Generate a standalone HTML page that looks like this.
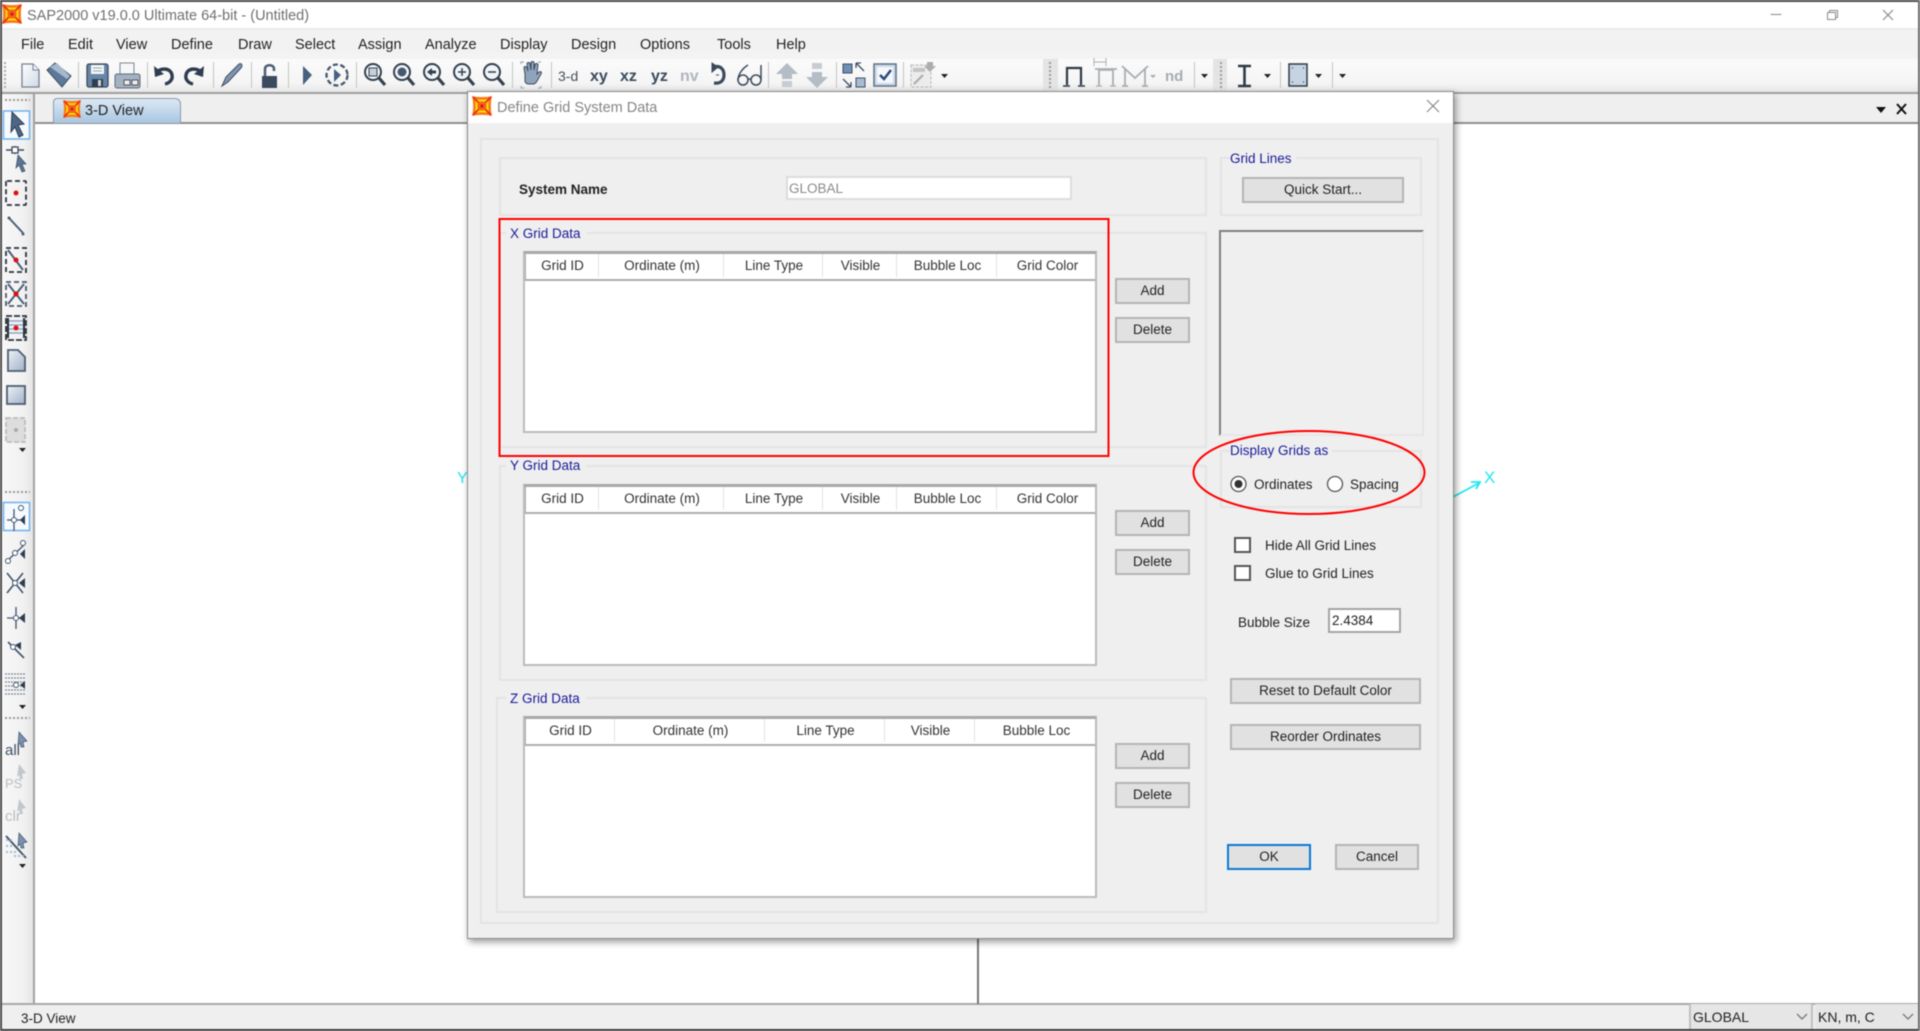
<!DOCTYPE html>
<html>
<head>
<meta charset="utf-8">
<title>SAP2000 v19.0.0 Ultimate 64-bit - (Untitled)</title>
<style>
html,body{margin:0;padding:0;width:1920px;height:1031px;overflow:hidden;background:#fff}
#root{position:relative;width:1920px;height:1031px;overflow:hidden;font-family:"Liberation Sans",sans-serif;background:#fff;filter:blur(.45px)}
.a{position:absolute;box-sizing:border-box}
.t{position:absolute;white-space:nowrap;line-height:18px;height:18px;color:#222;font-size:13.5px;margin-top:1px}
.m{font-size:14.5px;color:#222;top:35px}
.b{font-size:13.5px;color:#1a1a9a}
.btn{position:absolute;box-sizing:border-box;background:#e1e1e1;border:2px solid #b4b4b4;text-align:center;font-size:13.5px;color:#222;line-height:21px;white-space:nowrap}
.grp{position:absolute;box-sizing:border-box;border:2px solid #e4e4e4}
.tbl{position:absolute;box-sizing:border-box;background:#fff;border:2px solid #bcbcbc;border-top:3px solid #a8a8a8;left:523px;width:574px;height:182px}
.hd{position:absolute;left:0;top:0;height:25px;width:100%;border-bottom:2px solid #acacac;background:#fff;box-shadow:inset 1px 0 0 #b0b0b0}
.c{position:absolute;top:0;height:23px;padding-left:2px;text-align:center;font-size:13.5px;line-height:24px;color:#333;border-right:1px solid #e2e2e2;box-sizing:border-box;white-space:nowrap}
</style>
</head>
<body>
<div id="root">
<svg width="0" height="0" style="position:absolute">
  <defs>
    <symbol id="logo" viewBox="0 0 20 20">
      <path d="M0 0C6 1.500 14 1.500 20 0C18.500 6 18.500 14 20 20C14 18.500 6 18.500 0 20C1.500 14 1.500 6 0 0Z" fill="#f77a1a"/>
      <path d="M3 3C7 4 13 4 17 3C16 7 16 13 17 17C13 16 7 16 3 17C4 13 4 7 3 3Z" fill="#ffe600"/>
      <path d="M1 1L19 19M19 1L1 19" stroke="#ea2a18" stroke-width="1.800"/>
      <path d="M7.500 5.500h5l2 2v5l-2 2h-5l-2-2v-5z" fill="#f4641a"/>
      <path d="M8.500 8.500h3v3h-3z" fill="#d81818"/>
    </symbol>
    <linearGradient id="gb" x1="0" y1="0" x2="1" y2="1"><stop offset="0" stop-color="#eef2f7"/><stop offset="1" stop-color="#9fb1c7"/></linearGradient>
    <linearGradient id="gw" x1="0" y1="0" x2="1" y2="1"><stop offset="0" stop-color="#fff"/><stop offset="1" stop-color="#cfd9e5"/></linearGradient>
  </defs>
</svg>

<!-- window frame bars -->
<div class="a" style="left:0;top:0;width:1920px;height:2px;background:#4a4a4a"></div>
<div class="a" style="left:0;top:2px;width:1920px;height:27px;background:#fff"></div>
<div class="a" style="left:0;top:28px;width:1920px;height:31px;background:linear-gradient(#e9e9e9 0,#f2f2f2 8%,#f3f3f3)"></div>
<div class="a" style="left:0;top:59px;width:1920px;height:34px;background:linear-gradient(#fbfbfb,#f5f5f5 70%,#e6e6e6)"></div>
<div class="a" style="left:0;top:92px;width:1920px;height:2px;background:#9e9e9e"></div>
<div class="a" style="left:35px;top:94px;width:1885px;height:28px;background:#efefef"></div>
<div class="a" style="left:35px;top:122px;width:1885px;height:2px;background:#8f8f8f"></div>
<div class="a" style="left:0;top:94px;width:34px;height:910px;background:linear-gradient(90deg,#f8f8f8,#f1f1f1 70%,#e4e4e4)"></div>
<div class="a" style="left:33px;top:94px;width:2px;height:910px;background:#a2a2a2"></div>
<div class="a" style="left:0;top:1003px;width:1920px;height:26px;background:#efefef;border-top:2px solid #a8a8a8"></div>
<div class="a" style="left:0;top:1029px;width:1920px;height:2px;background:#3c3c3c"></div>
<div class="a" style="left:0;top:0;width:2px;height:1031px;background:#4a4a4a"></div>
<div class="a" style="left:1918px;top:0;width:2px;height:1031px;background:#6a6a6a"></div>
<div class="a" style="left:977px;top:930px;width:2px;height:74px;background:#777"></div>

<!-- Title bar -->
<svg class="a" style="left:2px;top:4px" width="20" height="20"><use href="#logo"/></svg>
<div class="t" style="left:27px;top:6px;font-size:14.5px;color:#707070">SAP2000 v19.0.0 Ultimate 64-bit - (Untitled)</div>
<svg class="a" style="left:1760px;top:4px" width="150" height="22" fill="none" stroke="#8a8a8a" stroke-width="1">
  <path d="M10.500 10.500h11"/>
  <path d="M67.500 8.500h8v7h-8zM69.500 8.500v-2h8v7h-2"/>
  <path d="M123 6l10 10M133 6l-10 10" stroke-width="1.200"/>
</svg>

<!-- Menu -->
<div class="t m" style="left:21px">File</div>
<div class="t m" style="left:68px">Edit</div>
<div class="t m" style="left:116px">View</div>
<div class="t m" style="left:171px">Define</div>
<div class="t m" style="left:238px">Draw</div>
<div class="t m" style="left:295px">Select</div>
<div class="t m" style="left:358px">Assign</div>
<div class="t m" style="left:425px">Analyze</div>
<div class="t m" style="left:500px">Display</div>
<div class="t m" style="left:571px">Design</div>
<div class="t m" style="left:640px">Options</div>
<div class="t m" style="left:717px">Tools</div>
<div class="t m" style="left:776px">Help</div>

<!-- Toolbar and left toolbar icons -->
<svg class="a" style="left:0;top:0" width="1920" height="1031" font-family="Liberation Sans, sans-serif">
  <!-- grips -->
  <path d="M5 62v28" stroke="#aaa" stroke-width="2" stroke-dasharray="2 2"/>
  <rect x="1043" y="59" width="15" height="33" fill="#e4e4e4"/>
  <rect x="1213" y="59" width="14" height="33" fill="#e4e4e4"/>
  <path d="M1050 62v28M1221 62v28" stroke="#9a9a9a" stroke-width="2" stroke-dasharray="2 2"/>
  <!-- separators -->
  <path d="M78.500 62v26M147.500 62v26M213.500 62v26M251.500 62v26M288.500 62v26M356.500 62v26M512.500 62v26M551.500 62v26M768.500 62v26M836.500 62v26M903.500 62v26M1194.500 62v26M1280.500 62v26M1332.500 62v26" stroke="#c4c4c4"/>
  <!-- new -->
  <path d="M22 64h11l6 6v17H22z" fill="url(#gw)" stroke="#76818f" stroke-width="1.300"/><path d="M33 64v6h6" fill="#eef" stroke="#76818f"/>
  <!-- open -->
  <path d="M47 70l8-7 16 13-9 11z" fill="#5d7898" stroke="#3d4e63"/><path d="M50 67l7-4 13 13-3 3z" fill="#a5b8cf"/>
  <!-- save -->
  <rect x="87" y="64" width="21" height="23" rx="2" fill="#6986a8" stroke="#3b4a5c" stroke-width="1.300"/><rect x="91" y="65" width="13" height="9" fill="#f4f6f8"/><path d="M93 68h9M93 71h9" stroke="#9aa"/><rect x="92" y="79" width="11" height="8" fill="#2f3e50"/><rect x="98" y="80" width="3" height="6" fill="#cfd6de"/>
  <!-- print -->
  <rect x="120" y="63" width="14" height="12" fill="#f5f7f9" stroke="#7a8794"/><rect x="115" y="74" width="25" height="14" rx="2" fill="#a3b1c1" stroke="#5e6c7b"/><rect x="124" y="80" width="6" height="5" fill="#eee" stroke="#556"/><rect x="132" y="80" width="6" height="5" fill="#eee" stroke="#556"/>
  <!-- undo redo -->
  <g fill="none" stroke="#2f3d50" stroke-width="3.400"><path d="M156 73c5-6 15-5 16 2 1 4-2 8-7 9"/><path d="M202 73c-5-6-15-5-16 2-1 4 2 8 7 9"/></g>
  <path d="M154 66l1 11 9-3zM204 66l-1 11-9-3z" fill="#2f3d50"/>
  <!-- pencil -->
  <path d="M222 86l4-9 13-13c2-1 3 0 3 2l-1 2-13 14z" fill="#7f95b0" stroke="#3e4d60"/>
  <!-- lock -->
  <rect x="262" y="76" width="15" height="12" fill="#3b4a5e"/><path d="M265 76v-7c0-5 9-5 9 0v2" fill="none" stroke="#4c5d73" stroke-width="2.500"/>
  <!-- play -->
  <path d="M303 66l9 9-9 10z" fill="#46617f"/>
  <circle cx="337" cy="75" r="10.500" fill="none" stroke="#46586d" stroke-width="2.300" stroke-dasharray="5 2.500"/><path d="M334 69l7 6-7 7z" fill="#46617f"/>
  <!-- zooms -->
  <g fill="#f2f5f8" stroke="#33414f" stroke-width="2">
    <circle cx="373" cy="72" r="8"/><circle cx="402" cy="72" r="8"/><circle cx="432" cy="72" r="8"/><circle cx="462" cy="72" r="8"/><circle cx="492" cy="72" r="8"/>
  </g>
  <g stroke="#33414f" stroke-width="3.200" fill="none"><path d="M379 78l6 7M408 78l6 7M438 78l6 7M468 78l6 7M498 78l6 7"/></g>
  <rect x="369" y="68" width="8" height="8" fill="#c5d0dc" stroke="#33414f"/>
  <circle cx="402" cy="72" r="4.500" fill="#46586d"/>
  <path d="M427 72l5-4v2.500h4v3h-4v2.500z" fill="#33414f"/>
  <path d="M458 72h8M462 68v8M488 72h8" stroke="#33414f" stroke-width="1.500"/>
  <!-- hand -->
  <path d="M521 64v-2h3M541 62h-3M521 88v-2M541 88v-2M521 88h3M541 88h-3" fill="none" stroke="#9fb0c4" stroke-width="1.300"/>
  <path d="M525 74l-1-6c0-2 2-2 3 0l1 3-1-7c0-2 3-2 3 0l1 6 0-7c0-2 3-2 3 0l0 7 1-5c0-2 3-2 3 0l-1 9 2-2c2-1 3 0 2 2l-4 7c-1 2-2 3-4 3h-4c-3 0-4-2-4-3z" fill="#8fa4bc" stroke="#3d4b5c"/>
  <!-- view text -->
  <text x="558" y="81" font-size="14" fill="#46505c">3-d</text>
  <g font-size="16" font-weight="bold" fill="#3b4a5c"><text x="590" y="81">xy</text><text x="620" y="81">xz</text><text x="651" y="81">yz</text></g>
  <text x="680" y="81" font-size="16" font-weight="bold" fill="#b0b6bd">nv</text>
  <!-- rotate -->
  <path d="M714 67c7-2 10 3 10 8 0 5-3 9-10 8" fill="none" stroke="#3c4a5c" stroke-width="3.200"/><path d="M712 63l6 4-6 5zM716 75h3" fill="#3c4a5c" stroke="#3c4a5c"/>
  <!-- glasses -->
  <g fill="none" stroke="#3c4a5c" stroke-width="1.500"><circle cx="743" cy="80" r="5"/><circle cx="756" cy="80" r="5"/><path d="M748 79h3M738 80c0-6 5-12 10-15M761 80V65"/></g>
  <!-- up / down -->
  <path d="M787 63l11 11h-6v5H782v-5h-6z" fill="#b4bcc5"/><rect x="782" y="81" width="10" height="6" fill="#c6ccd2"/>
  <path d="M817 88l11-11h-6v-5h-10v5h-6z" fill="#b4bcc5"/><rect x="812" y="63" width="10" height="6" fill="#c6ccd2"/>
  <!-- tile -->
  <rect x="843" y="64" width="9" height="9" fill="#6f8fb5" stroke="#3e4e63"/><rect x="856" y="78" width="9" height="9" fill="#a9bbd1" stroke="#3e4e63"/><path d="M856 63l8 8M856 63h5M856 63v5M851 87l-8-8M851 87h-5M851 87v-5" fill="none" stroke="#3e4e63" stroke-width="1.300"/>
  <!-- check -->
  <rect x="874" y="64" width="22" height="22" fill="#ced9e6" stroke="#5c7089" stroke-width="1.500"/><rect x="877" y="67" width="16" height="16" fill="#f4f7fb"/><path d="M880 75l4 4 7-9" fill="none" stroke="#2b4b78" stroke-width="2.500"/>
  <!-- disabled -->
  <rect x="911" y="65" width="20" height="22" fill="#ececec" stroke="#b8b8b8" stroke-dasharray="3 1.500"/><path d="M927 62h6v4h3l-6 6-6-6h3z" fill="#adadad"/><path d="M914 84l9-9" stroke="#aaa" stroke-width="2"/><rect x="913" y="68" width="12" height="4" fill="#c4c4c4"/>
  <path d="M941 74h7l-3.500 4z" fill="#222"/>
  <!-- Portal -->
  <path d="M1067 85V68h14v17" fill="none" stroke="#2e3a47" stroke-width="2.200"/><path d="M1063 86h7M1078 86h7" stroke="#2e3a47" stroke-width="1.500"/>
  <g fill="none" stroke="#a9aeb4" stroke-width="1.800"><path d="M1099 86V70h14v16M1095 69h22"/><path d="M1094 58v8M1094 62h12M1106 58v8" stroke-width="1"/><path d="M1096 86h6M1110 86h6" stroke-width="1.200"/></g>
  <g fill="none" stroke="#a9aeb4" stroke-width="1.800"><path d="M1125 86V68M1145 86V68M1122 66l13 12 13-12M1122 86h6M1142 86h6"/></g>
  <path d="M1150 75h6l-3 3z" fill="#a8a8a8"/>
  <text x="1165" y="81" font-size="15" font-weight="bold" fill="#a6acb3">nd</text>
  <path d="M1201 74h7l-3.500 4z" fill="#222"/>
  <path d="M1238 66h13M1238 86h13M1244.500 66v20" stroke="#2e3a47" stroke-width="2.600" fill="none"/>
  <path d="M1264 74h7l-3.500 4z" fill="#222"/>
  <rect x="1289" y="64" width="18" height="22" fill="#c6d3e2" stroke="#2e3a47" stroke-width="1.500"/><path d="M1292 68h1M1304 68h-1M1292 82h1M1304 82h-1" stroke="#222"/>
  <path d="M1315 74h7l-3.500 4zM1339 74h7l-3.500 4z" fill="#222"/>

  <!-- Left toolbar grips -->
  <path d="M5 100h25M5 492h25M5 718h25" stroke="#9a9a9a" stroke-width="2" stroke-dasharray="2 2"/>
  <rect x="3.500" y="111" width="26" height="28" fill="#f6faff" stroke="#6fb0ee" stroke-width="1.500"/>
  <rect x="3.500" y="502.500" width="26" height="28" fill="#f6faff" stroke="#6fb0ee" stroke-width="1.500"/>
  <!-- arrow -->
  <path d="M12 112l12 12-6 1 5 10-4 2-4-10-4 5z" fill="#4d6887" stroke="#2c3b4d"/>
  <!-- point + arrow -->
  <path d="M6 150h18M15 146v8" stroke="#3c4a5c" stroke-width="1.500"/><rect x="12" y="147" width="6" height="6" fill="#fff" stroke="#3c4a5c" stroke-width="1.300"/>
  <path d="M18 155l8 9-4 0 3 7-3 1-3-7-3 3z" fill="#5b7797" stroke="#3c4a5c" stroke-width=".7"/>
  <!-- dash box w/ point -->
  <rect x="6" y="181" width="20" height="24" rx="1" fill="none" stroke="#29323c" stroke-width="1.800" stroke-dasharray="5 3"/><circle cx="16" cy="193" r="2.500" fill="#e01010"/>
  <!-- line -->
  <path d="M9 218l14 15" stroke="#4a5e78" stroke-width="2"/><circle cx="9" cy="218" r="1.500" fill="#4a5e78"/><circle cx="23" cy="234" r="1.500" fill="#4a5e78"/>
  <!-- dash line -->
  <rect x="6" y="248" width="20" height="24" fill="none" stroke="#29323c" stroke-width="1.800" stroke-dasharray="5 3"/><path d="M8 250l15 20" stroke="#4a5e78" stroke-width="2"/><circle cx="16" cy="260" r="2.500" fill="#e01010"/>
  <!-- dash X -->
  <rect x="6" y="282" width="20" height="24" fill="none" stroke="#4a5a6c" stroke-width="1.800" stroke-dasharray="5 3"/><path d="M8 284l16 20M24 284L8 304" stroke="#4a5e78" stroke-width="2"/><circle cx="16" cy="294" r="2.500" fill="#e01010"/>
  <!-- dash stripes -->
  <rect x="6" y="316" width="20" height="24" fill="none" stroke="#29323c" stroke-width="1.800" stroke-dasharray="6 2"/><path d="M9 321h14M9 325h14M9 329h14M9 333h14" stroke="#8ea7c4" stroke-width="1.500"/><path d="M8 318v20M24 318v20" stroke="#29323c" stroke-width="2"/><circle cx="16" cy="328" r="2.500" fill="#e01010"/>
  <!-- area -->
  <path d="M8 350h10l7 7v14H8z" fill="url(#gb)" stroke="#4e5d6f" stroke-width="1.800"/>
  <rect x="7" y="386" width="18" height="18" fill="url(#gb)" stroke="#4e5d6f" stroke-width="1.800"/>
  <rect x="6" y="418" width="19" height="24" fill="#ddd" stroke="#bcbcbc" stroke-width="1.800" stroke-dasharray="5 2"/><circle cx="16" cy="430" r="2" fill="#aaa"/>
  <path d="M19 448h7l-3.500 4z" fill="#222"/>
  <!-- snap 1 -->
  <path d="M7 520h17M14 509v22" stroke="#3f556e" stroke-width="1.300"/><circle cx="14" cy="520" r="2.500" fill="#fff" stroke="#3f556e"/><circle cx="21" cy="508" r="2.500" fill="#fff" stroke="#3f556e"/><path d="M25 515l-5 5 5 5z" fill="#2f3d50"/>
  <!-- snap 2 -->
  <path d="M7 561l17-16" stroke="#3f556e" stroke-width="1.300"/><circle cx="8" cy="561" r="2.500" fill="#fff" stroke="#3f556e"/><circle cx="15" cy="553" r="2.500" fill="#fff" stroke="#3f556e"/><circle cx="23" cy="543" r="2.500" fill="#fff" stroke="#3f556e"/><path d="M25 549l-5 5 5 5z" fill="#2f3d50"/>
  <!-- snap 3 -->
  <path d="M7 573l16 20M23 573L7 593" stroke="#3f556e" stroke-width="1.600"/><circle cx="15" cy="583" r="2.500" fill="#fff" stroke="#3f556e"/><path d="M25 578l-6 5 6 5z" fill="#2f3d50"/>
  <!-- snap 4 -->
  <path d="M7 618h13M16 607v22" stroke="#3f556e" stroke-width="1.300"/><circle cx="16" cy="618" r="2.500" fill="#fff" stroke="#3f556e"/><path d="M25 613l-6 5 6 5z" fill="#2f3d50"/>
  <!-- snap 5 -->
  <path d="M8 642l16 16" stroke="#3f556e" stroke-width="1.600"/><circle cx="13" cy="647" r="2.500" fill="#fff" stroke="#3f556e"/><path d="M21 642l-6 3 6 5z" fill="#2f3d50"/>
  <!-- grid snap -->
  <path d="M5 674h20M5 678h20M5 682h20M5 686h20M5 690h20M5 694h20" stroke="#7d8793" stroke-width="1.300" stroke-dasharray="2 1"/><circle cx="16" cy="685" r="2.500" fill="#fff" stroke="#3f556e"/><path d="M25 681l-5 4 5 4z" fill="#2f3d50"/>
  <path d="M19 705h7l-3.500 4z" fill="#222"/>
  <!-- all / ps / clr -->
  <text x="5" y="755" font-size="15" fill="#3f5067">all</text>
  <path d="M19 732l8 9-4 1 1 5-3 0-1-4-2 2z" fill="#7a92ad" stroke="#46576b" stroke-width=".7"/>
  <text x="5" y="788" font-size="13" fill="#b9bdc2">PS</text>
  <path d="M19 764l7 9-4 1 1 5-3 0-1-4-2 2z" fill="#c3c7cc"/>
  <text x="5" y="821" font-size="15" fill="#b9bdc2">clr</text>
  <path d="M19 799l7 9-4 1 1 5-3 0-1-4-2 2z" fill="#c3c7cc"/>
  <path d="M6 836l20 22" stroke="#46576b" stroke-width="2"/><path d="M6 840h6M6 846h6M6 852h12M14 856h12" stroke="#a6bad2" stroke-dasharray="2 2" stroke-width="2"/>
  <path d="M19 833l8 9-4 1 1 5-3 0-1-4-2 2z" fill="#7a92ad" stroke="#46576b" stroke-width=".7"/>
  <path d="M19 864h7l-3.500 4z" fill="#222"/>

  <!-- tab strip controls -->
  <path d="M1876 107h10l-5 6z" fill="#111"/>
  <path d="M1897 104l9 10M1906 104l-9 10" stroke="#111" stroke-width="2"/>
  <!-- axes -->
  <text x="457" y="483" font-size="16" fill="#20e5ee">Y</text>
  <path d="M1453 497l26-14M1471 482l9 0-4 7" fill="none" stroke="#20e8f0" stroke-width="1.800"/>
  <text x="1484" y="483" font-size="17" fill="#20e8f0">X</text>
</svg>

<!-- Tab -->
<div class="a" style="left:53px;top:98px;width:128px;height:25px;background:linear-gradient(#dce8f4,#a9c6e2);border:1px solid #8a9aac;border-bottom:none;border-radius:4px 6px 0 0"></div>
<svg class="a" style="left:63px;top:100px" width="18" height="18"><use href="#logo"/></svg>
<div class="t" style="left:85px;top:101px;font-size:14.5px;color:#222">3-D View</div>

<!-- Status bar -->
<div class="t" style="left:21px;top:1009px;font-size:13.5px">3-D View</div>
<div class="a" style="left:1689px;top:1004px;width:124px;height:25px;background:#e6e6e6;border-left:2px solid #c0c0c0;border-right:2px solid #c0c0c0"></div>
<div class="t" style="left:1693px;top:1007px;font-size:14px">GLOBAL</div>
<div class="a" style="left:1815px;top:1004px;width:103px;height:25px;background:#e6e6e6"></div>
<div class="t" style="left:1818px;top:1007px;font-size:14px">KN, m, C</div>
<svg class="a" style="left:1795px;top:1011px" width="120" height="12" fill="none" stroke="#777" stroke-width="1.300"><path d="M2 3l5 5 5-5M108 3l5 5 5-5"/></svg>

<!-- Dialog -->
<div class="a" style="left:467px;top:91px;width:987px;height:848px;background:#efefef;border:1px solid #8a8a8a;box-shadow:2px 3px 7px rgba(0,0,0,.4)"></div>
<div class="a" style="left:468px;top:92px;width:985px;height:31px;background:#fff"></div>
<svg class="a" style="left:472px;top:96px" width="20" height="20"><use href="#logo"/></svg>
<div class="t" style="left:497px;top:98px;font-size:14.5px;color:#858585">Define Grid System Data</div>
<svg class="a" style="left:1426px;top:99px" width="14" height="14" fill="none" stroke="#7d7d7d" stroke-width="1"><path d="M1 1l12 12M13 1L1 13"/></svg>

<div class="grp" style="left:480px;top:138px;width:959px;height:786px"></div>
<div class="grp" style="left:499px;top:157px;width:708px;height:59px"></div>
<div class="grp" style="left:1220px;top:157px;width:202px;height:59px"></div>
<div class="t b" style="left:1230px;top:149px;background:#efefef;padding-right:4px">Grid Lines</div>
<div class="t" style="left:519px;top:180px;font-weight:bold;font-size:13.5px;color:#222">System Name</div>
<div class="a" style="left:786px;top:176px;width:286px;height:24px;background:#fff;border:2px solid #dcdcdc"></div>
<div class="t" style="left:789px;top:179px;font-size:13.5px;color:#8a8a8a">GLOBAL</div>
<div class="btn" style="left:1242px;top:177px;width:162px;height:26px">Quick Start...</div>

<!-- X group -->
<div class="grp" style="left:499px;top:232px;width:708px;height:216px"></div>
<div class="t b" style="left:506px;top:224px;background:#efefef;padding:0 6px 0 4px">X Grid Data</div>
<div class="tbl" style="top:251px">
  <div class="hd">
    <div class="c" style="left:0;width:74px">Grid ID</div>
    <div class="c" style="left:74px;width:125px">Ordinate (m)</div>
    <div class="c" style="left:199px;width:99px">Line Type</div>
    <div class="c" style="left:298px;width:74px">Visible</div>
    <div class="c" style="left:372px;width:100px">Bubble Loc</div>
    <div class="c" style="left:472px;width:99px;border-right:none">Grid Color</div>
  </div>
</div>
<div class="btn" style="left:1115px;top:278px;width:75px;height:26px">Add</div>
<div class="btn" style="left:1115px;top:317px;width:75px;height:26px">Delete</div>

<!-- Y group -->
<div class="grp" style="left:499px;top:465px;width:708px;height:216px"></div>
<div class="t b" style="left:506px;top:456px;background:#efefef;padding:0 6px 0 4px">Y Grid Data</div>
<div class="tbl" style="top:484px">
  <div class="hd">
    <div class="c" style="left:0;width:74px">Grid ID</div>
    <div class="c" style="left:74px;width:125px">Ordinate (m)</div>
    <div class="c" style="left:199px;width:99px">Line Type</div>
    <div class="c" style="left:298px;width:74px">Visible</div>
    <div class="c" style="left:372px;width:100px">Bubble Loc</div>
    <div class="c" style="left:472px;width:99px;border-right:none">Grid Color</div>
  </div>
</div>
<div class="btn" style="left:1115px;top:510px;width:75px;height:26px">Add</div>
<div class="btn" style="left:1115px;top:549px;width:75px;height:26px">Delete</div>

<!-- Z group -->
<div class="grp" style="left:496px;top:697px;width:711px;height:216px"></div>
<div class="t b" style="left:506px;top:689px;background:#efefef;padding:0 6px 0 4px">Z Grid Data</div>
<div class="tbl" style="top:716px">
  <div class="hd">
    <div class="c" style="left:0;width:90px">Grid ID</div>
    <div class="c" style="left:90px;width:150px">Ordinate (m)</div>
    <div class="c" style="left:240px;width:120px">Line Type</div>
    <div class="c" style="left:360px;width:90px">Visible</div>
    <div class="c" style="left:450px;width:121px;border-right:none">Bubble Loc</div>
  </div>
</div>
<div class="btn" style="left:1115px;top:743px;width:75px;height:26px">Add</div>
<div class="btn" style="left:1115px;top:782px;width:75px;height:26px">Delete</div>

<!-- preview -->
<div class="a" style="left:1219px;top:230px;width:205px;height:206px;border-top:2px solid #7f7f7f;border-left:2px solid #7f7f7f;border-right:2px solid #e6e6e6;border-bottom:2px solid #e6e6e6"></div>

<!-- Display Grids -->
<div class="grp" style="left:1220px;top:450px;width:202px;height:58px"></div>
<div class="t b" style="left:1230px;top:441px;background:#efefef;padding-right:4px">Display Grids as</div>
<svg class="a" style="left:1228px;top:474px" width="120" height="20">
  <circle cx="10.500" cy="10" r="7.500" fill="#fff" stroke="#555" stroke-width="1.300"/><circle cx="10.500" cy="10" r="4" fill="#333"/>
  <circle cx="107" cy="10" r="7.500" fill="#fff" stroke="#555" stroke-width="1.300"/>
</svg>
<div class="t" style="left:1254px;top:475px">Ordinates</div>
<div class="t" style="left:1350px;top:475px">Spacing</div>

<!-- checks -->
<div class="a" style="left:1234px;top:537px;width:17px;height:16px;background:#fff;border:2px solid #555"></div>
<div class="t" style="left:1265px;top:536px">Hide All Grid Lines</div>
<div class="a" style="left:1234px;top:565px;width:17px;height:16px;background:#fff;border:2px solid #555"></div>
<div class="t" style="left:1265px;top:564px">Glue to Grid Lines</div>
<div class="t" style="left:1238px;top:613px">Bubble Size</div>
<div class="a" style="left:1328px;top:608px;width:73px;height:25px;background:#fff;border:2px solid #a5a5a5"></div>
<div class="t" style="left:1332px;top:611px">2.4384</div>

<div class="btn" style="left:1230px;top:678px;width:191px;height:26px">Reset to Default Color</div>
<div class="btn" style="left:1230px;top:724px;width:191px;height:26px">Reorder Ordinates</div>
<div class="btn" style="left:1227px;top:844px;width:84px;height:26px;border-color:#0a78d6;line-height:22px">OK</div>
<div class="btn" style="left:1335px;top:844px;width:84px;height:26px;line-height:22px">Cancel</div>

<!-- Annotations -->
<svg class="a" style="left:0;top:0" width="1920" height="1031" fill="none" stroke="#f00" stroke-width="2">
  <rect x="499.500" y="219" width="609" height="237"/>
  <ellipse cx="1309" cy="472.500" rx="115.500" ry="41.500"/>
</svg>
</div>
</body>
</html>
